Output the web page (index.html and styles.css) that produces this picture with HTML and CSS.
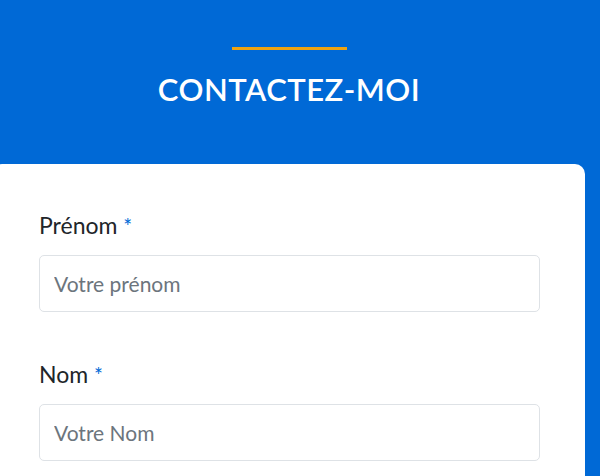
FILE: index.html
```html
<!DOCTYPE html>
<html lang="fr">
<head>
<meta charset="utf-8">
<link rel="stylesheet" href="styles.css">
</head>
<body>
<header class="header">
  <div class="bar"></div>
  <h1 class="title">CONTACTEZ-MOI</h1>
</header>
<main class="card">
  <div class="field">
    <label class="label" for="prenom">Prénom <span class="req">*</span></label>
    <input class="input" id="prenom" type="text" placeholder="Votre prénom">
  </div>
  <div class="field">
    <label class="label" for="nom">Nom <span class="req">*</span></label>
    <input class="input" id="nom" type="text" placeholder="Votre Nom">
  </div>
</main>
</body>
</html>
```
FILE: styles.css
```css
* { box-sizing: border-box; }
html, body { margin: 0; padding: 0; }
body {
  background: #0069d6;
  font-family: Lato, "Open Sans", sans-serif;
  width: 600px;
  height: 476px;
  overflow: hidden;
}
.header {
  width: 578px;
  height: 164px;
  padding-top: 47px;
  display: flex;
  flex-direction: column;
  align-items: center;
}
.bar {
  width: 115px;
  height: 3px;
  background: #eea312;
}
.title {
  margin: 21px 0 0;
  font-size: 31px;
  line-height: 37px;
  font-weight: 600;
  color: #fff;
  letter-spacing: 0.5px;
}
.card {
  margin-left: -8px;
  width: 593px;
  background: #fff;
  border-radius: 10px 10px 0 0;
  padding: 47px 45px 40px 47px;
  display: flex;
  flex-direction: column;
  gap: 48px;
}
.field {
  display: flex;
  flex-direction: column;
  gap: 15px;
}
.label {
  font-size: 23px;
  line-height: 28px;
  color: #212529;
}
.req {
  color: #0069d6;
  font-size: 21px;
}
.input {
  width: 501px;
  height: 57px;
  border: 1px solid #dee2e6;
  border-radius: 5px;
  padding: 0 14px;
  font-family: Lato, "Open Sans", sans-serif;
  font-size: 21px;
  color: #212529;
  background: #fff;
  outline: none;
}
.input::placeholder { color: #6c757d; opacity: 1; }
```
